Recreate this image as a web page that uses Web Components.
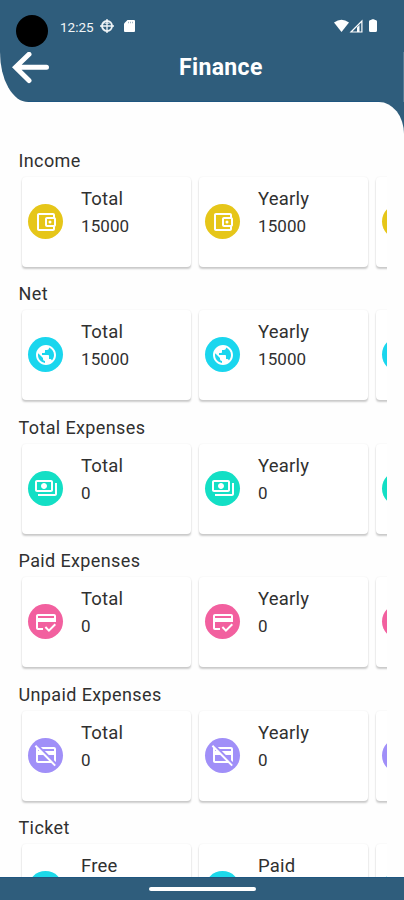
<!DOCTYPE html>
<html lang="en">
<head>
<meta charset="utf-8">
<title>Finance</title>
<style>
html,body{margin:0;height:100%;overflow:hidden;background:#fefefe}
body{font-family:Roboto,"Liberation Sans",sans-serif;color:#303030}
</style>
</head>
<body>
<finance-app></finance-app>
<script>
const ICONS = {
  wallet: ['#e6c619', '<path d="M21 7.28V5c0-1.1-.9-2-2-2H5c-1.11 0-2 .9-2 2v14c0 1.1.89 2 2 2h14c1.1 0 2-.9 2-2v-2.28c.59-.35 1-.98 1-1.72V9c0-.74-.41-1.37-1-1.72zM20 9v6h-7V9h7zM5 19V5h14v2h-6c-1.1 0-2 .9-2 2v6c0 1.1.9 2 2 2h6v2H5z"/><circle cx="16" cy="12" r="1.5"/>'],
  globe: ['#1ad6ee', '<path d="M12 2C6.48 2 2 6.48 2 12s4.48 10 10 10 10-4.480 10-10S17.520 2 12 2zm-1 17.930c-3.950-.49-7-3.850-7-7.930 0-.62.080-1.210.210-1.790L9 15v1c0 1.100.9 2 2 2v1.930zm6.900-2.540c-.26-.81-1-1.390-1.900-1.390h-1v-3c0-.55-.45-1-1-1H8v-2h2c.55 0 1-.45 1-1V7h2c1.100 0 2-.9 2-2v-.41c2.930 1.190 5 4.060 5 7.410 0 2.080-.8 3.970-2.100 5.390z"/>'],
  cash: ['#13dfc5', '<path d="M19 14V6c0-1.100-.9-2-2-2H3c-1.100 0-2 .9-2 2v8c0 1.100.9 2 2 2h14c1.100 0 2-.9 2-2zm-2 0H3V6h14v8zm-7-7c-1.660 0-3 1.340-3 3s1.340 3 3 3 3-1.340 3-3-1.340-3-3-3zm13 0v11c0 1.100-.9 2-2 2H4v-2h17V7h2z"/>'],
  paid: ['#f2609f', '<path d="M20 4H4c-1.110 0-1.990.89-1.990 2L2 18c0 1.110.89 2 2 2h5v-2H4v-6h18V6c0-1.110-.89-2-2-2zm0 4H4V6h16v2zm-5.070 11.170l-2.830-2.830-1.410 1.410L14.930 22 22 14.930l-1.410-1.410-5.660 5.650z"/>'],
  unpaid: ['#a08ff8', '<path d="M6.830 4H20c1.110 0 2 .89 2 2v12c0 .34-.080.660-.23.940L20 17.170V12h-5.170l-4-4H20V6H8.830l-2-2zm13.660 19.310L17.170 20H4c-1.110 0-2-.89-2-2L2.010 6c0-.34.080-.66.230-.93L.69 3.510 2.100 2.100l19.800 19.800-1.410 1.410zM4 6.830V8h1.170L4 6.830zM15.170 18l-6-6H4v6h11.170z"/>'],
  ticket: ['#1cd9ea', '<path d="M22 10V6c0-1.100-.9-2-2-2H4c-1.100 0-2 .9-2 2v4c1.100 0 2 .9 2 2s-.9 2-2 2v4c0 1.100.9 2 2 2h16c1.100 0 2-.9 2-2v-4c-1.100 0-2-.9-2-2s.9-2 2-2z"/>']
};

const define = (name, render) => customElements.define(name, class extends HTMLElement {
  connectedCallback() {
    if (!this.shadowRoot) this.attachShadow({mode: 'open'}).innerHTML = render(this);
  }
});

define('status-bar', () => `
<style>
:host{display:flex;box-sizing:border-box;height:52px;align-items:flex-start;padding:0 26px 0 16px;color:#f1f5f7}
.cam{width:32px;height:32px;border-radius:50%;background:#000;margin-top:15px}
time{font-size:13.500px;line-height:16px;margin:18.500px 0 0 12px;width:34px;white-space:nowrap}
svg{display:block;fill:#fff}
.globe{margin:19px 0 0 6px}.sd{margin:20px 0 0 10px}
.right{display:flex;margin:19px 0 0 auto}
</style>
<div class="cam"></div><time>12:25</time>
<svg class="globe" width="14" height="14" viewBox="0 0 14 14"><circle cx="7" cy="7" r="5" fill="none" stroke="#eef3f6" stroke-width="1.900"/><path d="M6.300 0h1.400v2H6.300zM6.300 12h1.400v2H6.300zM0 6.300h14v1.400H0zM6.300 3h1.400v8H6.300z" fill="#eef3f6"/><path d="M4.500 4.200h5" stroke="#eef3f6" fill="none"/></svg>
<svg class="sd" width="11" height="12" viewBox="0 0 11 12"><path d="M3.500 0H10a1 1 0 0 1 1 1v10a1 1 0 0 1-1 1H1a1 1 0 0 1-1-1V3.500z"/><path d="M4 1.800h1v1.400H4zM6 1.800h1v1.400H6zM8 1.800h1v1.400H8z" fill="#a5b8c5"/></svg>
<div class="right">
<svg width="44" height="14" viewBox="0 0 44 14"><path d="M0 3.600Q7.500-2.200 15 3.600L7.500 13z"/><path fill-rule="evenodd" d="M28.500.5V13.500H15.500zM27.300 3.500L18.400 12.400H23V8.500L25.500 6V12.400H27.300z"/><path d="M36.500 1h1V.3h3V1h1q1.500 0 1.500 1.500v9q0 1.500-1.500 1.500h-5Q35 13 35 11.500v-9Q35 1 36.500 1z"/></svg>
</div>`);

define('app-bar', () => `
<style>
:host{display:grid;grid-template-columns:179px 1fr;height:50px;color:#fff}
svg{display:block;margin-left:12px}
.title{font-size:23px;line-height:31px;font-weight:700;letter-spacing:.35px}
</style>
<svg width="38" height="32" viewBox="0 0 38 32"><path d="M34.500 15.300H5M17 2.300L3.500 15.300L17 28.500" fill="none" stroke="#fff" stroke-width="5" stroke-linecap="round" stroke-linejoin="miter"/></svg>
<div class="title"><slot></slot></div>`);

define('stat-card', el => {
  const [color, glyph] = ICONS[el.getAttribute('icon')];
  return `
<style>
:host{display:flex;box-sizing:border-box;flex:0 0 169px;height:90px;border-radius:4px;background:#fff;padding-left:6px;box-shadow:0 2px 2px -.5px rgba(0,0,0,.2),0 0 2px rgba(0,0,0,.07)}
.disc{flex:none;width:35px;height:35px;border-radius:50%;margin-top:27px;background:${color};display:grid;place-items:center}
svg{display:block;fill:#fff}
.text{margin:9px 0 0 18px;font-size:18.500px;line-height:27px;letter-spacing:.2px}
.value{font-size:17px;letter-spacing:.1px}
</style>
<div class="disc"><svg width="24" height="24" viewBox="0 0 24 24">${glyph}</svg></div>
<div class="text"><div><slot></slot></div><div class="value">${el.getAttribute('value')}</div></div>`;
});

define('stat-section', el => {
  const icon = el.getAttribute('icon'), v = el.getAttribute('value');
  const labels = el.getAttribute('labels').split(',');
  return `
<style>
:host{display:block;flex:none;height:133.400px}
h2{margin:0 0 0 18.500px;font-size:18px;line-height:24px;font-weight:400;letter-spacing:.38px;height:25px;padding-top:1px}
.row{display:flex;gap:8px;margin-right:17px;padding:3px 0 6px 22px;overflow:hidden}
</style>
<h2><slot></slot></h2>
<div class="row">${labels.map(l => `<stat-card icon="${icon}" value="${v}">${l}</stat-card>`).join('')}<stat-card icon="${icon}" value=""></stat-card></div>`;
});

define('finance-app', () => `
<style>
:host{display:flex;flex-direction:column;width:404px;height:900px;overflow:hidden;background:#fefefe}
header{flex:none;height:102px;background:linear-gradient(#2f5d7c,#2f5d7c) 0 0/100% 52px no-repeat,#fefefe}
app-bar{background:linear-gradient(#1f5680,#1f5680) 28px 100%/352px 1px no-repeat,#2f5d7c;border-bottom-left-radius:28px 50px;box-shadow:inset -1px 0 #547b95}
.back{flex:1;min-height:0;background:linear-gradient(#2f5d7c,#2f5d7c) 100% 0/40px 40px no-repeat}
main{display:flex;flex-direction:column;box-sizing:border-box;height:100%;overflow:hidden;padding-top:46px;background:#fefefe;border-top-right-radius:25px 32px}
footer{flex:none;height:23px;background:#2f5d7c;box-shadow:inset 0 1px #1f5680;display:flex;justify-content:center}
.home{width:107px;height:4px;border-radius:2px;background:#fff;margin-top:10px}
</style>
<header><status-bar></status-bar><app-bar>Finance</app-bar></header>
<div class="back"><main>
<stat-section icon="wallet" value="15000" labels="Total,Yearly">Income</stat-section>
<stat-section icon="globe" value="15000" labels="Total,Yearly">Net</stat-section>
<stat-section icon="cash" value="0" labels="Total,Yearly">Total Expenses</stat-section>
<stat-section icon="paid" value="0" labels="Total,Yearly">Paid Expenses</stat-section>
<stat-section icon="unpaid" value="0" labels="Total,Yearly">Unpaid Expenses</stat-section>
<stat-section icon="ticket" value="" labels="Free,Paid">Ticket</stat-section>
</main></div>
<footer><div class="home"></div></footer>`);
</script>
</body>
</html>
